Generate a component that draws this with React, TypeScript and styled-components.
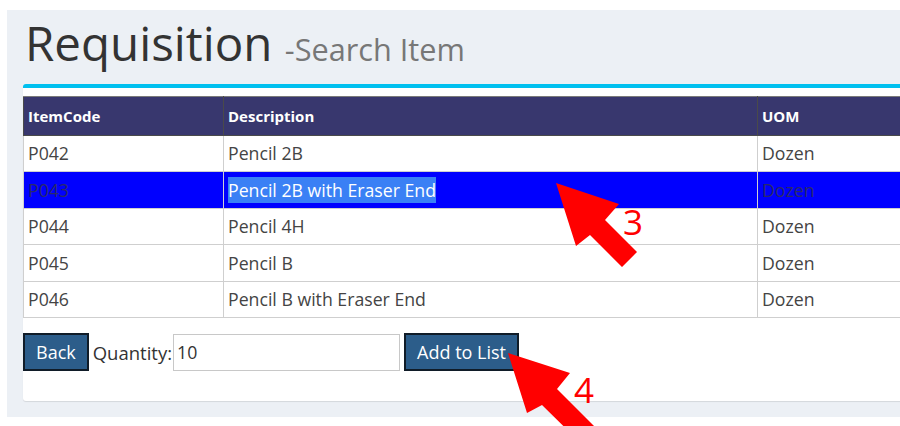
import React from 'react';
import styled, { createGlobalStyle } from 'styled-components';

type Item = { code: string; description: string; uom: string };

const items: Item[] = [
  { code: 'P042', description: 'Pencil 2B', uom: 'Dozen' },
  { code: 'P043', description: 'Pencil 2B with Eraser End', uom: 'Dozen' },
  { code: 'P044', description: 'Pencil 4H', uom: 'Dozen' },
  { code: 'P045', description: 'Pencil B', uom: 'Dozen' },
  { code: 'P046', description: 'Pencil B with Eraser End', uom: 'Dozen' },
];

const selectedCode = 'P043';

const App: React.FC = () => {
  return (
    <>
      <GlobalStyle />
      <Page>
        <ContentWrapper>
          <PageTitle>
            Requisition <SubTitle>-Search Item</SubTitle>
          </PageTitle>

          <Box>
            <ItemTable>
              <thead>
                <tr>
                  <HeadCell style={{ width: 200 }}>ItemCode</HeadCell>
                  <HeadCell style={{ width: 534 }}>Description</HeadCell>
                  <HeadCell>UOM</HeadCell>
                </tr>
              </thead>
              <tbody>
                {items.map((item) => {
                  const selected = item.code === selectedCode;
                  return (
                    <Row key={item.code} $selected={selected}>
                      <Cell>{item.code}</Cell>
                      <Cell>
                        {selected ? <Highlight>{item.description}</Highlight> : item.description}
                      </Cell>
                      <Cell>{item.uom}</Cell>
                    </Row>
                  );
                })}
              </tbody>
            </ItemTable>

            <Actions>
              <Button type="button">Back</Button>
              <Label htmlFor="qty">Quantity:</Label>
              <QtyInput id="qty" defaultValue="10" />
              <Button type="button">Add to List</Button>
            </Actions>
          </Box>
        </ContentWrapper>

        {/* step markers drawn over the form */}
        <Markers width="900" height="426" viewBox="0 0 900 426">
          <polygon
            points="556,183 619,204 605,220 637,252 622,267 590,235 576,246"
            fill="#ff0000"
          />
          <text x="623" y="235" fontSize="35" fill="#ff0000" fontFamily="Open Sans, sans-serif">
            3
          </text>
          <polygon
            points="508,353 570,373 557,389 620,452 605,467 542,405 527,413"
            fill="#ff0000"
          />
          <text x="574" y="403" fontSize="35" fill="#ff0000" fontFamily="Open Sans, sans-serif">
            4
          </text>
        </Markers>
      </Page>
    </>
  );
};

const GlobalStyle = createGlobalStyle`
  html, body {
    margin: 0;
    padding: 0;
    background: #ffffff;
    overflow: hidden;
  }

  body {
    font-family: "Open Sans", "Liberation Sans", sans-serif;
    color: #333;
  }

  * {
    box-sizing: border-box;
  }
`;

const Page = styled.div`
  position: relative;
  width: 900px;
  height: 426px;
  overflow: hidden;
`;

const ContentWrapper = styled.section`
  margin: 10px 0 0 7px;
  height: 407px;
  background: #ecf0f5;
  padding: 7px 0 0 16px;
  overflow: hidden;
`;

const PageTitle = styled.h1`
  margin: 0 0 8px 2px;
  font-size: 47.5px;
  font-weight: 400;
  line-height: 51.7px;
  color: #333;
  white-space: nowrap;
`;

const SubTitle = styled.small`
  font-size: 30.7px;
  color: #777;
  margin-left: 0;
`;

const Box = styled.div`
  width: 1000px;
  background: #fff;
  border-top: 4px solid #00c0ef;
  border-radius: 3px;
  box-shadow: 0 1px 1px rgba(0, 0, 0, 0.1);
  padding: 8px 0 30px;
`;

const ItemTable = styled.table`
  width: 1000px;
  border-collapse: collapse;
  table-layout: fixed;
  font-size: 17.7px;
`;

const HeadCell = styled.th`
  height: 39px;
  padding: 0 4px;
  background: #38376e;
  color: #fff;
  font-size: 15px;
  font-weight: 700;
  text-align: left;
  border: 1px solid #4a4a4a;
  border-top-color: #7a7a7a;
`;

const Row = styled.tr<{ $selected: boolean }>`
  background: ${({ $selected }) => ($selected ? '#0000ff' : '#fff')};
  color: ${({ $selected }) => ($selected ? '#2a2a6a' : '#444')};
`;

const Cell = styled.td`
  height: 36.5px;
  padding: 0 4px;
  border: 1px solid #cfcfcf;
  white-space: nowrap;
`;

const Highlight = styled.span`
  display: inline-block;
  line-height: 26px;
  background: #3a80f5;
  color: #fff;
`;

const Actions = styled.div`
  display: flex;
  align-items: center;
  gap: 4px;
  margin-top: 15px;
`;

const Button = styled.button`
  height: 38px;
  padding: 0 11px;
  background: #2c5d8a;
  color: #fff;
  border: 2px solid #101c28;
  border-radius: 0;
  font-family: "Open Sans", "Liberation Sans", sans-serif;
  font-size: 18px;
`;

const Label = styled.label`
  color: #333;
  font-size: 18.5px;
  margin-right: -3px;
`;

const QtyInput = styled.input`
  width: 227px;
  height: 37px;
  padding: 0 3px;
  border: 1px solid #c8c8c8;
  font-family: "Open Sans", "Liberation Sans", sans-serif;
  font-size: 17.7px;
  color: #333;
`;

const Markers = styled.svg`
  position: absolute;
  left: 0;
  top: 0;
  pointer-events: none;
`;

export default App;
